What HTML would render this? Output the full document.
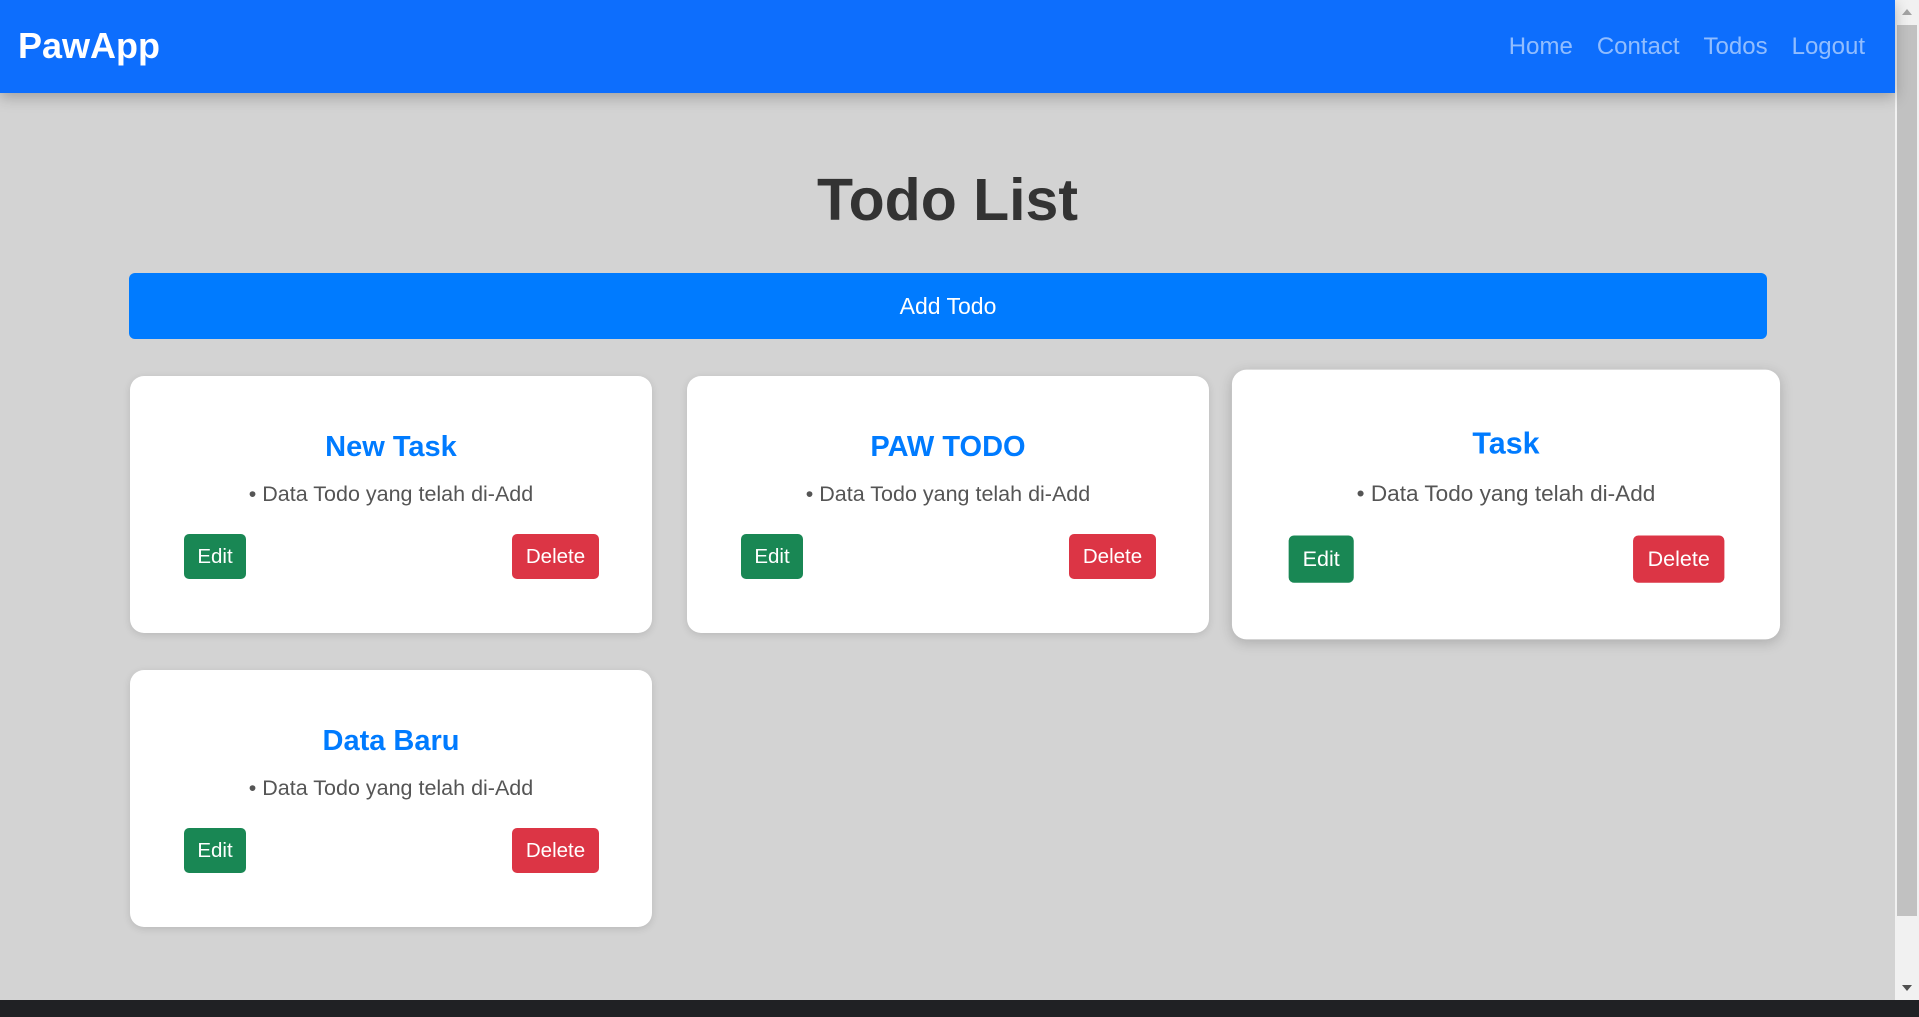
<!DOCTYPE html>
<html><head><meta charset="utf-8"><style>
*{box-sizing:border-box;margin:0;padding:0}
body{width:1919px;height:1017px;overflow:hidden;background:#d3d3d3;font-family:"Liberation Sans",Arial,sans-serif;position:relative}
.nav{position:absolute;left:0;top:0;width:1895px;height:93px;background:#0d6efd;box-shadow:0 4px 14px rgba(0,0,0,.25);z-index:2}
.brand{position:absolute;left:18px;top:24px;font-size:36px;font-weight:bold;color:#fff;line-height:44px}
.links{position:absolute;right:30px;top:33px;font-size:24px;color:rgba(255,255,255,.55);line-height:28px}
.links span{margin-left:24px}
h1{position:absolute;left:0;width:1895px;top:164px;text-align:center;font-size:59px;color:#333;line-height:72px}
.add{position:absolute;left:129px;top:273px;width:1638px;height:66px;background:#007bff;border-radius:6px;color:#fff;font-size:23px;text-align:center;line-height:66px}
.card{position:absolute;width:522px;height:257px;background:#fff;border-radius:14px;box-shadow:0 2px 8px rgba(0,0,0,.12)}
.card h3{position:absolute;left:0;right:0;top:52px;text-align:center;font-size:29px;color:#007bff;line-height:38px}
.card .t{position:absolute;left:0;right:0;top:106px;text-align:center;font-size:21.5px;color:#555;line-height:24px}
.btn{position:absolute;top:158px;height:45px;border-radius:5px;color:#fff;font-size:20.5px;line-height:45px;text-align:center}
.e{left:54px;width:62px;background:#198754}
.d{right:53px;width:87px;background:#dc3545}
.sb{position:absolute;left:1895px;top:0;width:24px;height:1000px;background:#f1f1f1}
.th{position:absolute;left:2px;top:25px;width:20px;height:891px;background:#c1c1c1}
.bot{position:absolute;left:0;top:1000px;width:1919px;height:17px;background:#202124}
</style></head><body>
<div class="nav"><div class="brand">PawApp</div><div class="links"><span>Home</span><span>Contact</span><span>Todos</span><span>Logout</span></div></div>
<h1>Todo List</h1>
<div class="add">Add Todo</div>
<div class="card" style="left:130px;top:376px"><h3>New Task</h3><div class="t">• Data Todo yang telah di-Add</div><div class="btn e">Edit</div><div class="btn d">Delete</div></div>
<div class="card" style="left:687px;top:376px"><h3>PAW TODO</h3><div class="t">• Data Todo yang telah di-Add</div><div class="btn e">Edit</div><div class="btn d">Delete</div></div>
<div class="card" style="left:1245px;top:376px;transform:scale(1.05);box-shadow:0 3px 12px rgba(0,0,0,.18)"><h3>Task</h3><div class="t">• Data Todo yang telah di-Add</div><div class="btn e">Edit</div><div class="btn d">Delete</div></div>
<div class="card" style="left:130px;top:670px"><h3>Data Baru</h3><div class="t">• Data Todo yang telah di-Add</div><div class="btn e">Edit</div><div class="btn d">Delete</div></div>
<div class="sb"><div class="th"></div><div style="position:absolute;left:7px;top:9px;border-left:5px solid transparent;border-right:5px solid transparent;border-bottom:6px solid #a3a3a3"></div><div style="position:absolute;left:7px;top:985px;border-left:5px solid transparent;border-right:5px solid transparent;border-top:6px solid #505050"></div></div>
<div class="bot"></div>
</body></html>
